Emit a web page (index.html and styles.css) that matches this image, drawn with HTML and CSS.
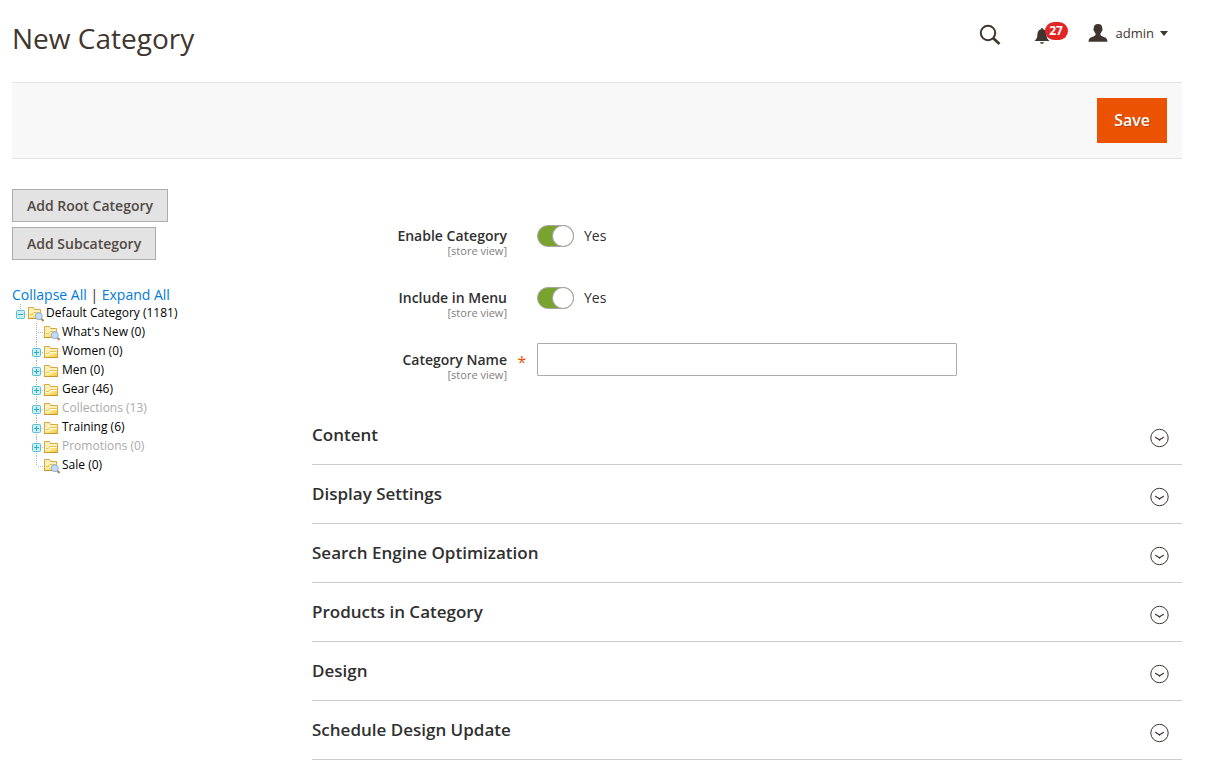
FILE: index.html
```
<!DOCTYPE html>
<html lang="en">
<head>
<meta charset="utf-8">
<title>New Category</title>
<link rel="stylesheet" href="styles.css">
</head>
<body>
<svg class="defs" aria-hidden="true">
  <defs>
    <linearGradient id="folder-fill" x1="0" y1="0" x2="1" y2="1">
      <stop offset="0" stop-color="#fffad6"/><stop offset=".5" stop-color="#fae888"/><stop offset="1" stop-color="#efc23a"/>
    </linearGradient>
    <symbol id="folder" viewBox="0 0 16 16">
      <path d="M.5 13.500v-11h5l1 2h7v9z" fill="#fdf0ba" stroke="#dba63c"/>
      <path d="M1 13.500v-4.500h3.500l1.500-2h7v6.500z" fill="url(#folder-fill)"/>
      <path d="M2 9.500h2.500l1.500-2h6.500" fill="none" stroke="#e8c258"/>
      <path d="M2.500 10.500h2.500l1.500-2h6" fill="none" stroke="#fffdf0"/>
      <path d="M0 13.500h14" stroke="#c99832"/>
    </symbol>
    <symbol id="folder-search" viewBox="0 0 16 16">
      <path d="M.5 12.500v-11h5l1 2h6v9z" fill="#fdf0ba" stroke="#dba63c"/>
      <path d="M1 12.500v-4.500h3.500l1.500-2h6v6.500z" fill="url(#folder-fill)"/>
      <path d="M2 8.500h2.500l1.500-2h6" fill="none" stroke="#e8c258"/>
      <path d="M0 12.500h13" stroke="#c99832"/>
      <path d="M13 12.500l2.500 2.500" stroke="#b9825a" stroke-width="2"/>
      <circle cx="10.800" cy="10.200" r="3.500" fill="#bfdcf8" stroke="#93b0dc"/>
    </symbol>
    <symbol id="plus" viewBox="0 0 9 9">
      <rect x=".5" y=".5" width="8" height="8" rx="1" fill="#c9eef3" stroke="#5cc0d0"/>
      <path d="M2 4.500h5M4.500 2v5" stroke="#32aec3"/>
    </symbol>
    <symbol id="minus" viewBox="0 0 9 9">
      <rect x=".5" y=".5" width="8" height="8" rx="1" fill="#c9eef3" stroke="#5cc0d0"/>
      <path d="M2 4.500h5" stroke="#32aec3"/>
    </symbol>
    <symbol id="open" viewBox="0 0 20 20">
      <circle cx="9.500" cy="10" r="8.700" fill="none" stroke="#41362f"/>
      <path d="M5.300 9c1.200 1.400 3 1.600 4.200 3c1.200-1.400 3-1.600 4.200-3" fill="none" stroke="#41362f" stroke-width="1.200"/>
    </symbol>
  </defs>
</svg>
<div class="page">
  <header class="page-header">
    <h1 class="page-title">New Category</h1>
    <div class="header-tools">
      <button class="tool tool-search" type="button" aria-label="Search">
        <svg width="22" height="22" viewBox="0 0 22 22"><circle cx="9" cy="9" r="7.200" fill="none" stroke="#41362f" stroke-width="2"/><path d="M14 14l6.500 6" stroke="#41362f" stroke-width="2.700"/></svg>
      </button>
      <button class="tool tool-bell" type="button" aria-label="Notifications">
        <svg width="16" height="18" viewBox="0 0 16 18"><path d="M7 2.300c0-1.600 2-1.600 2 0c3 .7 3.500 3 3.600 6c.1 3 1 4 2.900 5.700H.5C2.300 12.300 3.200 11 3.300 8.300c.1-3 .8-5.300 3.700-6zM6 15.200h4c-.4 2-3.600 2-4 0z" fill="#41362f"/></svg>
        <span class="badge">27</span>
      </button>
      <button class="tool tool-user" type="button">
        <svg class="avatar" width="20" height="18" viewBox="0 0 20 18"><path d="M10 0c3 0 4.500 2 4.300 4.800c.5.400.4 1.700-.4 2.200c-.4 1.300-.9 2-1.500 2.600c0 1.800.2 2.200 2 2.800c3 .9 5 1.500 5 5.300H.6c0-3.800 2-4.400 5-5.300c1.800-.6 2-1 2-2.800C7 9 6.500 8.300 6.100 7c-.8-.5-.9-1.800-.4-2.200C5.500 2 7 0 10 0z" fill="#41362f"/></svg>
        <span>admin</span>
        <svg width="8" height="5" viewBox="0 0 8 5"><path d="M0 0h8L4 5z" fill="#41362f"/></svg>
      </button>
    </div>
  </header>

  <div class="action-bar"><button class="save" type="button">Save</button></div>

  <div class="columns">
    <aside class="sidebar">
      <div class="side-buttons">
        <button class="side-button" type="button">Add Root Category</button>
        <button class="side-button" type="button">Add Subcategory</button>
      </div>
      <div class="tree-actions"><a href="#">Collapse All</a> <span class="divider">|</span> <a href="#">Expand All</a></div>
      <ul class="tree">
        <li>
          <div class="node"><svg class="joint" viewBox="0 0 16 19"><path class="dots" d="M8.500 0v6M14 10.500h2"/><use href="#minus" x="4" y="6" width="9" height="9"/></svg><svg class="folder"><use href="#folder-search"/></svg><a href="#">Default Category (1181)</a></div>
          <ul class="branch">
            <li class="node"><svg class="joint" viewBox="0 0 16 19"><path class="dots" d="M8.500 0v19M10 9.500h6"/></svg><svg class="folder"><use href="#folder-search"/></svg><a href="#">What's New (0)</a></li>
            <li class="node"><svg class="joint" viewBox="0 0 16 19"><path class="dots" d="M8.500 0v19M14 10.500h2"/><use href="#plus" x="4" y="6" width="9" height="9"/></svg><svg class="folder"><use href="#folder"/></svg><a href="#">Women (0)</a></li>
            <li class="node"><svg class="joint" viewBox="0 0 16 19"><path class="dots" d="M8.500 0v19M14 10.500h2"/><use href="#plus" x="4" y="6" width="9" height="9"/></svg><svg class="folder"><use href="#folder"/></svg><a href="#">Men (0)</a></li>
            <li class="node"><svg class="joint" viewBox="0 0 16 19"><path class="dots" d="M8.500 0v19M14 10.500h2"/><use href="#plus" x="4" y="6" width="9" height="9"/></svg><svg class="folder"><use href="#folder"/></svg><a href="#">Gear (46)</a></li>
            <li class="node inactive"><svg class="joint" viewBox="0 0 16 19"><path class="dots" d="M8.500 0v19M14 10.500h2"/><use href="#plus" x="4" y="6" width="9" height="9"/></svg><svg class="folder"><use href="#folder"/></svg><a href="#">Collections (13)</a></li>
            <li class="node"><svg class="joint" viewBox="0 0 16 19"><path class="dots" d="M8.500 0v19M14 10.500h2"/><use href="#plus" x="4" y="6" width="9" height="9"/></svg><svg class="folder"><use href="#folder"/></svg><a href="#">Training (6)</a></li>
            <li class="node inactive"><svg class="joint" viewBox="0 0 16 19"><path class="dots" d="M8.500 0v19M14 10.500h2"/><use href="#plus" x="4" y="6" width="9" height="9"/></svg><svg class="folder"><use href="#folder"/></svg><a href="#">Promotions (0)</a></li>
            <li class="node"><svg class="joint" viewBox="0 0 16 19"><path class="dots" d="M8.500 0v10M10 10.500h6"/></svg><svg class="folder"><use href="#folder-search"/></svg><a href="#">Sale (0)</a></li>
          </ul>
        </li>
      </ul>
    </aside>

    <main class="main">
      <form class="fields">
        <div class="field">
          <label class="field-label" for="enable">Enable Category <small>[store view]</small></label>
          <span class="required"></span>
          <div class="control"><input class="switch" id="enable" type="checkbox" role="switch" checked><label for="enable">Yes</label></div>
        </div>
        <div class="field">
          <label class="field-label" for="menu">Include in Menu <small>[store view]</small></label>
          <span class="required"></span>
          <div class="control"><input class="switch" id="menu" type="checkbox" role="switch" checked><label for="menu">Yes</label></div>
        </div>
        <div class="field">
          <label class="field-label" for="name">Category Name <small>[store view]</small></label>
          <span class="required">*</span>
          <div class="control"><input class="text-input" id="name" type="text" required></div>
        </div>
      </form>
      <div class="sections">
        <button class="section" type="button">Content<svg><use href="#open"/></svg></button>
        <button class="section" type="button">Display Settings<svg><use href="#open"/></svg></button>
        <button class="section" type="button">Search Engine Optimization<svg><use href="#open"/></svg></button>
        <button class="section" type="button">Products in Category<svg><use href="#open"/></svg></button>
        <button class="section" type="button">Design<svg><use href="#open"/></svg></button>
        <button class="section" type="button">Schedule Design Update<svg><use href="#open"/></svg></button>
      </div>
    </main>
  </div>
</div>
</body>
</html>
```
FILE: styles.css
```
* { box-sizing: border-box; }
body {
  margin: 0;
  background: #fff;
  color: #303030;
  font: 14px/20px "Open Sans", "Noto Sans", sans-serif;
}
button, input { font: inherit; color: inherit; }
button { margin: 0; cursor: pointer; }
a { text-decoration: none; }
ul { list-style: none; margin: 0; padding: 0; }
svg { display: block; flex: none; }
.defs { position: absolute; width: 0; height: 0; }
.page { padding: 0 23px 0 12px; }

.page-header {
  display: flex;
  justify-content: space-between;
  align-items: flex-start;
  height: 82px;
  padding: 20px 14px 0 0;
}
.page-title { margin: 0; color: #41362f; font-size: 28px; font-weight: 400; line-height: 36px; }
.header-tools { display: flex; align-items: center; gap: 33px; height: 26px; }
.tool { display: flex; align-items: center; padding: 0; border: 0; background: none; color: #41362f; }
.tool-search { padding-top: 4px; }
.tool-bell { position: relative; width: 36px; padding-top: 6px; }
.badge {
  position: absolute;
  top: 1px;
  left: 11px;
  min-width: 23px;
  border-radius: 9px;
  background: #e22626;
  color: #fff;
  font-size: 12px;
  font-weight: 700;
  line-height: 18px;
  text-align: center;
}
.tool-user { gap: 6px; margin-left: -15px; font-size: 13px; }
.avatar { margin-right: 2px; }

.action-bar {
  display: flex;
  justify-content: flex-end;
  padding: 15px;
  border-top: 1px solid #e3e3e3;
  border-bottom: 1px solid #e3e3e3;
  background: #f8f8f8;
}
.save {
  padding: 11px 16px;
  border: 1px solid #eb5202;
  background: #eb5202;
  color: #fff;
  font-size: 16px;
  font-weight: 600;
  line-height: 21px;
  text-shadow: 1px 1px 0 rgba(0, 0, 0, .25);
}

.columns { display: grid; grid-template-columns: 300px minmax(0, 1fr); padding-top: 30px; }
.side-buttons { display: flex; flex-direction: column; align-items: flex-start; gap: 5px; }
.side-button {
  padding: 6px 14px;
  border: 1px solid #adadad;
  background: #e3e3e3;
  color: #514943;
  font-weight: 600;
  line-height: 19px;
}
.tree-actions { padding-top: 25px; line-height: 19px; }
.tree-actions a { color: #007bdb; }
.divider { color: #303030; }

.tree { font-size: 12px; line-height: 19px; }
.branch { padding-left: 16px; }
.node { display: flex; align-items: center; height: 19px; }
.node a { padding: 0 0 2px 2px; color: #000; }
.node.inactive a { color: #aaa; }
.joint { width: 16px; height: 19px; }
.folder { width: 16px; height: 16px; }
.dots { fill: none; stroke: #b5b5b5; stroke-dasharray: 1 1; }

.fields { display: grid; gap: 29px; padding-top: 30px; }
.field { display: grid; grid-template-columns: 195px 30px minmax(0, 420px); height: 33px; align-items: start; }
.field-label { padding-top: 7px; font-weight: 600; text-align: right; line-height: 20px; }
.field-label small { display: block; color: #808080; font-size: 11px; font-weight: 400; line-height: 9px; }
.required { color: #eb5202; font-size: 16px; line-height: 38px; text-align: center; }
.control { display: flex; align-items: center; gap: 10px; height: 33px; }
.text-input { width: 100%; height: 33px; padding: 0 9px; border: 1px solid #adadad; border-radius: 1px; background: #fff; }
.switch {
  appearance: none;
  display: flex;
  width: 37px;
  height: 22px;
  margin: 1px 0 0;
  border: 1px solid #aaa6a0;
  border-radius: 11px;
  background: #e3e3e3;
}
.switch::before {
  content: "";
  width: 20px;
  height: 20px;
  border-radius: 50%;
  background: #fff;
  box-shadow: 0 0 0 1px #aaa6a0;
}
.switch:checked { justify-content: flex-end; background: #79a22e; }

.sections { padding-top: 30px; }
.section {
  display: flex;
  justify-content: space-between;
  align-items: center;
  width: 100%;
  height: 59px;
  padding: 0 12px 0 0;
  border: 0;
  border-bottom: 1px solid #ccc;
  background: none;
  font-size: 17px;
  font-weight: 600;
  text-align: left;
}
.section svg { width: 20px; height: 20px; margin-top: 6px; }
```
